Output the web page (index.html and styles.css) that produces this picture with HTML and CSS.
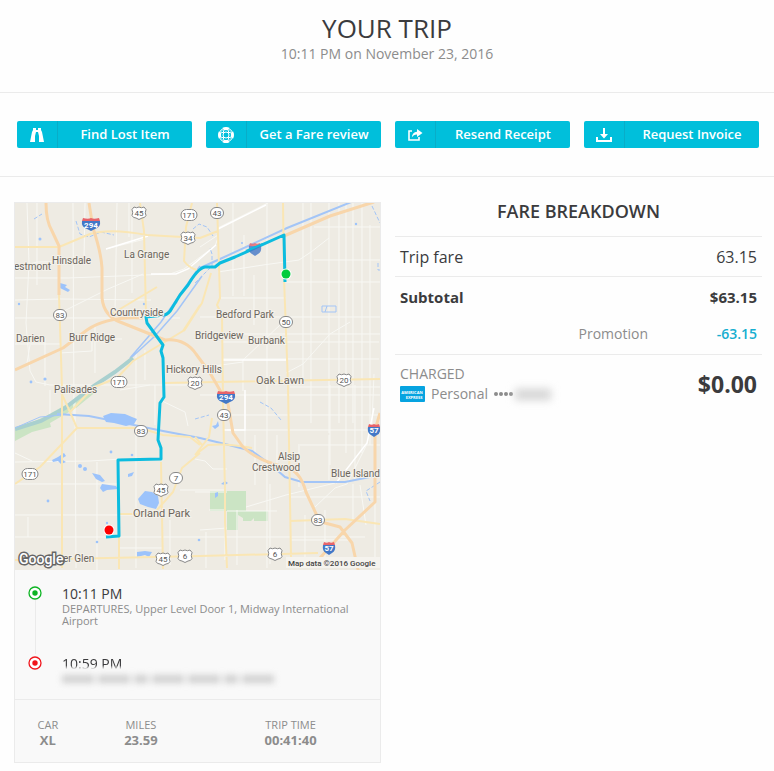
FILE: index.html
```html
<!DOCTYPE html>
<html lang="en">
<head>
  <meta charset="UTF-8" />
  <meta name="viewport" content="width=device-width, initial-scale=1.0" />
  <title>Your Trip</title>
  <link rel="stylesheet" href="styles.css">
</head>
<body>

  <header class="trip-header">
    <h1>YOUR TRIP</h1>
    <p>10:11 PM on November 23, 2016</p>
  </header>

  <nav class="actions">
    <button type="button" class="action-btn">
      <span class="action-icon">
        <svg width="16" height="16" viewBox="0 0 16 16" fill="#fff"><path d="M4 1h3v2h2V1h3v2l1 2 2 10h-5V9L9 5H7L6 9v6H1L3 5l1-2z"/></svg>
      </span>
      <span class="action-label">Find Lost Item</span>
    </button>
    <button type="button" class="action-btn">
      <span class="action-icon">
        <svg width="16" height="16" viewBox="0 0 16 16" fill="none" stroke="#fff"><circle cx="8" cy="8" r="7"/><circle cx="8" cy="8" r="3"/><path d="M5.200 2.200a6.400 6.400 0 0 1 5.600 0M5.200 13.800a6.400 6.400 0 0 0 5.600 0M2.200 5.200a6.400 6.400 0 0 0 0 5.600M13.800 5.200a6.400 6.400 0 0 1 0 5.600" stroke-width="3"/><path d="M5 3l1 3-3-1M11 3l-1 3 3-1M5 13l1-3-3 1M11 13l-1-3 3 1"/></svg>
      </span>
      <span class="action-label">Get a Fare review</span>
    </button>
    <button type="button" class="action-btn">
      <span class="action-icon">
        <svg width="16" height="16" viewBox="0 0 16 16"><path d="M5 4H2v9h10v-3" fill="none" stroke="#fff" stroke-width="1.6"/><path d="M10 2l5.500 4L10 10V7.400C7.500 7.400 6 8.300 4.800 10.500 5 7 6.800 4.900 10 4.700z" fill="#fff"/></svg>
      </span>
      <span class="action-label">Resend Receipt</span>
    </button>
    <button type="button" class="action-btn">
      <span class="action-icon">
        <svg width="16" height="16" viewBox="0 0 16 16"><path d="M1 10v4h14v-4" fill="none" stroke="#fff" stroke-width="2"/><path d="M7 1h2v6h3l-4 4.500L4 7h3z" fill="#fff"/></svg>
      </span>
      <span class="action-label">Request Invoice</span>
    </button>
  </nav>

  <main class="trip">
    <section class="trip-card">
      <svg class="map" viewBox="15 203 365 367" role="img" aria-label="Route map">
        <defs>
          <g id="oval"><rect x="-6.500" y="-5.500" width="13" height="11" rx="5.500"/></g>
          <g id="oval-wide"><rect x="-8" y="-5.500" width="16" height="11" rx="5.500"/></g>
          <g id="us"><path d="M-5-6Q-2.500-4.500 0-6 2.500-4.500 5-6L7-3.500Q5.500 0 7 2.500 6 5 3 5L0 6.500-3 5Q-6 5-7 2.500-5.500 0-7-3.500z"/></g>
          <g id="interstate"><path d="M-9-3H9Q10 3 4 5L0 7-4 5Q-10 3-9-3z" fill="#4378c7"/><path d="M-8-6Q-3-4.500 0-6 3-4.500 8-6L9-3H-9z" fill="#e8646a"/></g>
          <g id="interstate-small"><path d="M-6-3H6Q7 3 3 5L0 7-3 5Q-7 3-6-3z" fill="#4378c7"/><path d="M-5-6Q-2-4.500 0-6 2-4.500 5-6L6-3H-6z" fill="#e8646a"/></g>
        </defs>

        <rect x="15" y="203" width="365" height="367" fill="#eeebe3"/>

        <!-- parks -->
        <g fill="#cbe4c4">
          <path d="M210 491h36v20h-36zM227 511h41v10h-14v-3l-3 3h-8v-3l-5-3v15h-11z"/>
          <path d="M15 430l31-14 30-17 14-11 8 2-22 18-26 15 1 4-19 5-17 9z"/>
        </g>

        <!-- minor roads -->
        <g fill="none" stroke="#f8f8f4" stroke-width="1">
          <path d="M27 203l2 60-3 60 4 48 6 11 14 3h150M15 278h53l102-4 14-5 31-23 3-8M37 203v82M15 300l46-1 90 1M73 203l1 220M15 268l22-6 47-1M85 203l-1 57M117 203l-2 110M132 215v78M106 249l39-10M129 203v34M15 318h165M45 338v48M95 325v48M58 314l50-25 35-15M15 344h45M60 353l32-2v-12h30M75 400l1 168M97 462v108M30 345l-3 18M136 353v215M15 462l75-1 31-2M15 484h104M15 515h146M15 537h350M28 517v20M15 453l17 8M50 390v25M145 350v30M155 385v40"/>
          <path d="M218 228l50-25M218 235l-18 12M218 272l45-7 36-5 12-8 18-14M221 298h65M233 203v93M244 235v61M254 275v50M267 203v365M284 282h96M303 203v178M311 203v220M314 260h66M314 227h66M329 203v230M339 203v220M346 203v250M353 203v220M362 203v250M370 225v220M200 317h180M223 334h157M222 342h157M222 359h157M185 370l58-8M243 391v-31l38-36M286 373l17-9 27-30 20-12M200 395h180M223 415h157M227 430h153M300 445h80M245 395v53M277 435v30M299 444v43M329 435v45M255 435v50M206 532v36M237 510v55M227 511h50M246 507l40-12 49-12M200 530l27-2M195 492h32M209 510h17M291 497h89M270 484v80M305 515v52M325 510v48M291 540h60M315 507l20-19 12-4 20-40 5-20 2-50M353 484v36M360 485l6 40M375 502v65M330 385v80M355 385v95M290 387h90M195 459l10 2 8 8h14M160 400l25 12 3 14M120 390l30-5M120 548h42M180 490h45v70M170 520v45"/>
        </g>
        <g fill="none" stroke="#fff" stroke-width="1.400">
          <path d="M151 274h25l12-5 28-24M243 360h43M223 360h60M106 249l42-13M218 229l48-24M223 430h22v-40M336 483l31-40 7-35"/>
        </g>

        <!-- water -->
        <g fill="none" stroke="#a3c5f7">
          <path d="M200 266l-19 27-20 29-31 36M202 276l-25 35-22 25-23 21" stroke-width="1.500"/>
          <path d="M133 358l-18 14-24 16-26 20-24 13-26 8" stroke="#a9d0cf" stroke-width="4"/>
          <path d="M200 268l20-9 67-31 94-38" stroke-width="2"/>
          <path d="M57 414l32 2 35 7 39 8 37 7 25 6 27 7 18 13 15 13 17 5h43l35-7" stroke-width="2"/>
          <path d="M15 428l25-11 23-2" stroke-width="1"/>
          <path d="M76 221l4 13 9 3 12-5 13 3M193 229l6-5 8 3 6 9M195 283l17-17v-12l-2-6M260 402l11 6 10 12M195 419l14-4M372 206l8 17M378 263v7h4M380 482l-14 9 4 10M34 219l8-5" stroke-width="1" stroke-dasharray="4 2"/>
          <path d="M322 306h14v6h-14zM327 306l-2 6" stroke-width="1"/>
        </g>
        <g fill="#9cc3fb">
          <path d="M103 416l8-3 14 1 7 3 5 2-3 5-8 2-12-3-8-1zM138 499l7-8 7 1 6 4 1 7-3 6-8-2-8-3zM102 484l7 1 7 1 2 3-11 1-4 2-3-4zM92 473l8 2 5 6-3 1-6-3zM60 283l7 2-2 2 5 3-2 2-8-4zM52 460l6-3 6-4 2 3-5 3 5 3-5 2-3-3-5 1zM137 552l8-1 7 1-3 5-4-2-8 2zM215 493l3-1v4l-3 2zM212 426l4-1 2-4 1 5-4 3zM221 484l4-3 3 2-3 2zM128 474l6-2-2 4-4 1z"/>
          <circle cx="40" cy="239" r="1.500"/><circle cx="19" cy="304" r="1.200"/><circle cx="144" cy="304" r="1.200"/><circle cx="176" cy="302" r="1.500"/><circle cx="31" cy="382" r="1.400"/><circle cx="45" cy="379" r="1.600"/><circle cx="132" cy="455" r="1.300"/><circle cx="111" cy="452" r="1.400"/><circle cx="80" cy="466" r="2"/><circle cx="85" cy="469" r="2"/><circle cx="97" cy="542" r="1.300"/><circle cx="107" cy="523" r="1.200"/><circle cx="356" cy="224" r="1.200"/><circle cx="242" cy="243" r="1"/><circle cx="62" cy="541" r="1"/><circle cx="48" cy="501" r="1.400"/><circle cx="199" cy="540" r="1.300"/>
        </g>

        <!-- main roads -->
        <g fill="none" stroke="#fae6b4" stroke-width="2" stroke-linejoin="round">
          <path d="M15 247h44l31-13q20-6 57 1l53 3 18-7M140 203l4 28 2 84M110 315l47-28M192 203l-6 24-2 34q5 7 13 9M59 295l3 93v180M200 305l-17 26-50 30-16 17-23 9-24 25M60 390l10 22 7 16h63l23 7 27 2 10 8M77 428l-37 39-25 17M217 203l3 95-3 7 5 10 1 87 2 90v30l2 46M283 203l1 75 4 107 3 172M163 383l217-4M195 455l13-10q20-2 44 3M195 437l8 9M212 418l-3 19-14 18M161 462l2 107M200 453l-18 15-9 24-16 18M120 514h40M119 535v34M290 521l55-2 35 5M15 560l185-4 118-3M211 273l-9 30-18 28"/>
        </g>
        <g fill="none" stroke="#f8d6ab" stroke-width="3" stroke-linejoin="round">
          <path d="M46 203q0 18 6 28l7 15v49M89 203l4 25q8 24 9 40v30q2 18 18 24l45 18q20-2 31 14l14 19 18 31 5 29 10 14q15 14 42 20 15 3 21 25l12 26 7 5 15 4 12 16 7 31v30M15 370l48-22 24-18q20-14 56-12M284 236l46-20 44-14M380 413l-5 17v72l-30 28-25 28"/>
        </g>

        <!-- route -->
        <path d="M106 537l13-1-1-76 43-1v-11l-3-8 2-37 4-6-1-39-2-7 2-6-16-22-1-6 18-2q5-1 8-7l8-13 8-10q10-17 17-18l10 0 5-4 15-6 49-22 1 47" fill="none" stroke="#0cbcdf" stroke-width="3" stroke-linejoin="round"/>

        <!-- road signs -->
        <g fill="#fff" stroke="#888" stroke-width="1">
          <use href="#oval-wide" x="189" y="215"/><use href="#oval" x="217" y="213"/><use href="#oval" x="60" y="315"/><use href="#oval" x="286" y="322"/><use href="#oval-wide" x="119" y="382"/><use href="#oval" x="224" y="415"/><use href="#oval" x="141" y="431"/><use href="#oval-wide" x="30" y="474"/><use href="#oval" x="176" y="478"/><use href="#oval" x="318" y="520"/>
          <use href="#us" x="139" y="213"/><use href="#us" x="188" y="238"/><use href="#us" x="195" y="383"/><use href="#us" x="344" y="380"/><use href="#us" x="161" y="490"/><use href="#us" x="163" y="559"/><use href="#us" x="185" y="556"/><use href="#us" x="275" y="554"/>
        </g>
        <use href="#interstate" x="91" y="224"/><use href="#interstate" x="226" y="397"/><use href="#interstate-small" x="255" y="249" opacity=".8"/><use href="#interstate-small" x="374" y="430"/><use href="#interstate-small" x="329" y="548"/>
        <path d="M246 251l17-7" stroke="#0cbcdf" stroke-width="2"/>
        <g class="sign-text">
          <text x="189" y="218">171</text><text x="217" y="216">43</text><text x="60" y="318">83</text><text x="286" y="325">50</text><text x="119" y="385">171</text><text x="224" y="418">43</text><text x="141" y="434">83</text><text x="30" y="477">171</text><text x="176" y="481">7</text><text x="318" y="523">83</text>
          <text x="139" y="216">45</text><text x="188" y="241">34</text><text x="195" y="386">20</text><text x="344" y="383">20</text><text x="161" y="493">45</text><text x="163" y="562">45</text><text x="185" y="559">6</text><text x="275" y="557">6</text>
        </g>
        <g class="sign-text interstate-text">
          <text x="91" y="228">294</text><text x="226" y="400">294</text><text x="374" y="433">57</text><text x="329" y="551">57</text>
        </g>

        <!-- place names -->
        <g class="place">
          <text x="14" y="270">estmont</text><text x="52" y="264">Hinsdale</text><text x="124" y="258">La Grange</text><text x="110" y="316">Countryside</text><text x="16" y="342">Darien</text><text x="69" y="341">Burr Ridge</text><text x="216" y="318">Bedford Park</text><text x="195" y="339">Bridgeview</text><text x="248" y="344">Burbank</text><text x="166" y="373">Hickory Hills</text><text x="54" y="393">Palisades</text><text x="278" y="460">Alsip</text><text x="252" y="471">Crestwood</text><text x="331" y="477">Blue Island</text><text x="63" y="562">er Glen</text>
          <text class="place-big" x="256" y="384">Oak Lawn</text><text class="place-big" x="133" y="517">Orland Park</text>
        </g>

        <circle cx="286" cy="274" r="5.500" fill="#fff"/><circle cx="286" cy="274" r="4.500" fill="#00cc3d"/>
        <circle cx="109" cy="530" r="5.500" fill="#fff"/><circle cx="109" cy="530" r="4.500" fill="#f00"/>

        <rect x="286" y="557" width="94" height="11" fill="#f5f3ee"/>
        <text class="map-credit" x="288" y="566">Map data ©2016 Google</text>
        <text class="map-logo" x="19" y="564">Google</text>
      </svg>

      <ol class="stops">
        <li class="stop stop-start">
          <svg class="stop-dot" width="14" height="14" viewBox="0 0 14 14"><circle cx="7" cy="7" r="6" fill="#fff" stroke="#0db423" stroke-width="1.300"/><circle cx="7" cy="7" r="2.700" fill="#0db423"/></svg>
          <div>
            <h2>10:11 PM</h2>
            <p>DEPARTURES, Upper Level Door 1, Midway International Airport</p>
          </div>
        </li>
        <li class="stop">
          <svg class="stop-dot" width="14" height="14" viewBox="0 0 14 14"><circle cx="7" cy="7" r="6" fill="#fff" stroke="#f0151c" stroke-width="1.300"/><circle cx="7" cy="7" r="2.700" fill="#f0151c"/></svg>
          <div>
            <h2 class="smudged">10:59 PM</h2>
            <div class="hidden-address" aria-hidden="true"><i></i><i></i><i></i><i></i><i></i><i></i><i></i></div>
          </div>
        </li>
      </ol>

      <dl class="stats">
        <div><dt>CAR</dt><dd>XL</dd></div>
        <div><dt>MILES</dt><dd>23.59</dd></div>
        <div><dt>TRIP TIME</dt><dd>00:41:40</dd></div>
      </dl>
    </section>

    <section class="fare">
      <h2>FARE BREAKDOWN</h2>
      <table class="fare-table">
        <tbody>
          <tr class="line"><td colspan="2">Trip fare</td><td class="amount">63.15</td></tr>
          <tr class="line subtotal"><td colspan="2">Subtotal</td><td class="amount">$63.15</td></tr>
          <tr class="promotion"><td></td><td>Promotion</td><td class="amount">-63.15</td></tr>
          <tr class="line charged">
            <td colspan="2">
              <div>CHARGED</div>
              <div class="payment">
                <svg width="25" height="16" viewBox="0 0 25 16"><rect width="25" height="16" rx="1" fill="#06a3e0"/><g class="card-text"><text x="12" y="8">AMERICAN</text><text x="14" y="13">EXPRESS</text></g></svg>
                <span>Personal</span>
                <span class="card-dots"><i></i><i></i><i></i><i></i></span>
                <span class="hidden-digits" aria-hidden="true"></span>
              </div>
            </td>
            <td class="amount total">$0.00</td>
          </tr>
        </tbody>
      </table>
    </section>
  </main>

</body>
</html>
```
FILE: styles.css
```css
:root {
  --bg: #fefefe;
  --card: #f9f9f9;
  --line: #ebebeb;
  --cyan: #00bfdb;
  --dark: #3b3b3d;
  --grey: #8c8c8c;
}

* {
  box-sizing: border-box;
  margin: 0;
  padding: 0;
}

body {
  font-family: 'Open Sans', 'Noto Sans', sans-serif;
  font-size: 14px;
  background: var(--bg);
  color: var(--dark);
}

.trip-header {
  padding: 12px 14px 29px;
  text-align: center;
  border-bottom: 1px solid var(--line);
}

.trip-header h1 {
  font-size: 26px;
  line-height: 32px;
  font-weight: 400;
}

.trip-header p {
  line-height: 19px;
  color: var(--grey);
}

/* Action buttons */
.actions {
  display: grid;
  grid-template-columns: repeat(4, 1fr);
  gap: 14px;
  padding: 28px 15px 28px 17px;
  border-bottom: 1px solid var(--line);
}

.action-btn {
  display: flex;
  height: 27px;
  border: none;
  border-radius: 2px;
  background: var(--cyan);
  color: #fff;
  font: 600 13px/27px 'Open Sans', 'Noto Sans', sans-serif;
  cursor: pointer;
}

.action-icon {
  display: flex;
  width: 41px;
  height: 27px;
  align-items: center;
  justify-content: center;
  border-right: 1px solid #08adc8;
}

.action-label {
  flex: 1;
  text-align: center;
}

.trip {
  display: grid;
  grid-template-columns: 1fr 1fr;
  align-items: start;
  gap: 14px;
  padding: 25px 12px 8px 14px;
}

/* Map card */
.trip-card {
  background: var(--card);
  border: 1px solid var(--line);
}

.map {
  display: block;
  width: 100%;
  height: auto;
  font-family: Roboto, sans-serif;
}

.sign-text {
  font-size: 8px;
  text-anchor: middle;
  fill: #555;
}

.interstate-text {
  font-weight: 700;
  fill: #fff;
}

.place {
  font-size: 10px;
  fill: #6b655c;
  stroke: #f4f1ea;
  stroke-width: 2px;
  paint-order: stroke;
}

.place-big {
  font-size: 11px;
}

.map-credit {
  font-size: 8px;
  font-weight: 500;
  fill: #444;
}

.map-logo {
  font-size: 14px;
  font-weight: 500;
  fill: #fff;
  stroke: #666;
  stroke-width: 3px;
  paint-order: stroke;
}

.stops {
  padding: 14px 13px 12px;
  list-style: none;
  border-bottom: 1px solid var(--line);
}

.stop {
  display: flex;
  gap: 20px;
  min-height: 33px;
}

.stop-start {
  min-height: 70px;
  background: linear-gradient(var(--line), var(--line)) 7px 16px / 1px 100% no-repeat;
}

.stop-dot {
  flex: none;
  margin-top: 2px;
}

.stop h2 {
  font-size: 14px;
  line-height: 19px;
  font-weight: 400;
}

.stop p {
  font-size: 11px;
  line-height: 12px;
  color: var(--grey);
}

.smudged {
  -webkit-mask-image: linear-gradient(#000 60%, transparent 80%);
  mask-image: linear-gradient(#000 60%, transparent 80%);
}

.hidden-address {
  display: flex;
  gap: 4px;
  padding-top: 2px;
  filter: blur(3px);
}

.hidden-address i {
  width: 32px;
  height: 8px;
  background: #d0d0d0;
}

.hidden-address i:nth-child(3n) {
  width: 14px;
}

.stats {
  display: flex;
  padding: 18px 0 13px;
  text-align: center;
  color: var(--grey);
}

.stats div {
  flex: 1;
}

.stats div:first-child {
  flex: 0 0 18%;
}

.stats div:nth-child(2) {
  flex: 0 0 33%;
}

.stats dt {
  font-size: 11px;
  line-height: 14px;
}

.stats dd {
  font-size: 13px;
  line-height: 17px;
  font-weight: 700;
}

/* Fare breakdown */
.fare h2 {
  font-size: 18px;
  line-height: 18px;
  font-weight: 600;
  text-align: center;
  padding-bottom: 16px;
}

.fare-table {
  width: 100%;
  border-collapse: collapse;
}

.fare-table td {
  height: 40px;
  padding: 0 5px;
  font-size: 16px;
}

.fare-table .line td {
  border-top: 1px solid var(--line);
}

.fare-table .amount {
  text-align: right;
}

.fare-table .subtotal td {
  font-size: 15px;
  font-weight: 700;
}

.fare-table .promotion td {
  height: 38px;
  padding-bottom: 4px;
  font-size: 14px;
  color: var(--grey);
  text-align: right;
}

.fare-table .promotion .amount {
  width: 109px;
  font-weight: 600;
  color: #16aed0;
}

.fare-table .charged td {
  height: 59px;
  font-size: 14px;
  line-height: 20px;
  color: var(--grey);
}

.fare-table .charged .total {
  font-size: 23px;
  font-weight: 700;
  color: var(--dark);
}

.payment {
  display: flex;
  align-items: center;
  gap: 6px;
}

.card-text {
  font-size: 4px;
  font-weight: 700;
  text-anchor: middle;
  fill: #fff;
}

.card-dots {
  display: flex;
  gap: 1px;
}

.card-dots i {
  width: 4px;
  height: 4px;
  border-radius: 50%;
  background: var(--grey);
}

.hidden-digits {
  width: 36px;
  height: 11px;
  margin-left: -4px;
  background: #d4d4d4;
  filter: blur(4px);
}
```
